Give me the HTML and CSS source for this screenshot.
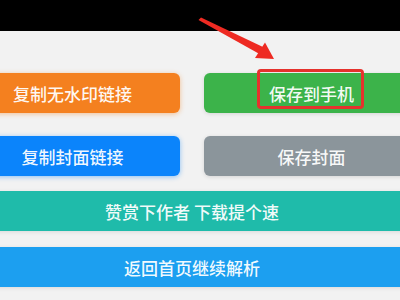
FILE: index.html
```html
<!DOCTYPE html>
<html lang="zh-CN">
<head>
<meta charset="utf-8">
<link rel="stylesheet" href="styles.css">
</head>
<body>
<div class="page">
  <div class="topbar"></div>
  <div class="content">
    <div class="row">
      <div class="btn orange">复制无水印链接</div>
      <div class="btn green">保存到手机</div>
    </div>
    <div class="row row2">
      <div class="btn blue">复制封面链接</div>
      <div class="btn gray">保存封面</div>
    </div>
    <div class="bar teal">赞赏下作者 下载提个速</div>
    <div class="bar sky">返回首页继续解析</div>
  </div>
  <div class="highlight"></div>
  <svg class="arrow" width="400" height="80" viewBox="0 0 400 80">
    <polygon points="198.5,20 201,17.5 263,47 259.5,54" fill="#ee2a22"/>
    <polygon points="274,59 255,58 265,42.5" fill="#ee2a22"/>
  </svg>
</div>
</body>
</html>
```
FILE: styles.css
```css
html, body {
  margin: 0;
  padding: 0;
}
body {
  width: 400px;
  height: 300px;
  overflow: hidden;
  background: #f2f2f2;
  font-family: "Noto Sans CJK SC", "Noto Sans", sans-serif;
}
.page {
  position: relative;
  width: 400px;
  height: 300px;
  overflow: hidden;
}
.topbar {
  height: 31px;
  background: #000;
}
.content {
  margin-left: -35px;
  width: 454px;
  padding-top: 42px;
  display: flex;
  flex-direction: column;
}
.row {
  display: grid;
  grid-template-columns: 215px 215px;
  column-gap: 24px;
}
.row2 {
  margin-top: 23px;
}
.btn, .bar {
  height: 40px;
  display: flex;
  align-items: center;
  justify-content: center;
  color: rgba(255, 255, 255, 0.94);
  font-size: 17px;
  font-weight: 500;
  border-radius: 6px;
}
.orange {
  background: #f4801f;
  box-shadow: 0 1px 5px rgba(244, 128, 31, 0.45);
}
.green {
  background: #3cb34a;
  box-shadow: 0 1px 4px rgba(0, 0, 0, 0.12);
}
.blue {
  background: #0b84fb;
  box-shadow: 0 1px 5px rgba(11, 132, 251, 0.45);
}
.gray {
  background: #8b959b;
  box-shadow: 0 1px 4px rgba(0, 0, 0, 0.12);
}
.teal {
  margin-top: 15px;
  background: #1fbbaa;
  box-shadow: 0 1px 4px rgba(0, 0, 0, 0.1);
}
.sky {
  margin-top: 16px;
  background: #1c9ff0;
  box-shadow: 0 1px 4px rgba(0, 0, 0, 0.1);
}
.highlight {
  position: absolute;
  left: 257px;
  top: 69px;
  width: 101px;
  height: 34px;
  border: 3px solid #e5322d;
  border-radius: 4px;
}
.arrow {
  position: absolute;
  left: 0;
  top: 0;
}
```
